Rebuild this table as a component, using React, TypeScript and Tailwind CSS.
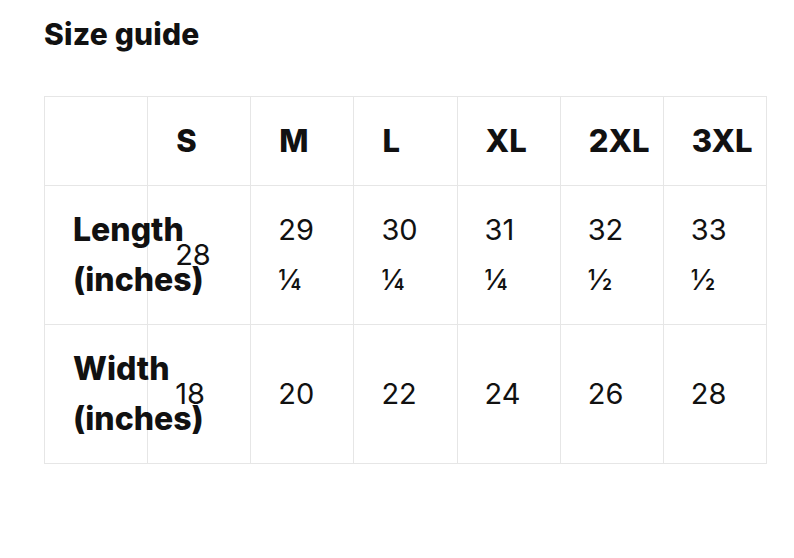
import React from 'react';

const sizes = ['S', 'M', 'L', 'XL', '2XL', '3XL'];

const rows = [
  { label: 'Length (inches)', values: ['28', '29 ¼', '30 ¼', '31 ¼', '32 ½', '33 ½'] },
  { label: 'Width (inches)', values: ['18', '20', '22', '24', '26', '28'] },
];

export default function App() {
  return (
    <div className="w-[794px] h-[558px] bg-white text-[#111] font-['Inter',sans-serif] px-[44px] pt-[14px]">
      <h1 className="text-[30px] leading-[40px] font-extrabold tracking-[0.2px]">Size guide</h1>

      <table className="mt-[42px] w-[723px] table-fixed border-collapse">
        <thead>
          <tr>
            <th className="border-[1.5px] border-[#e6e6e6] pl-[28px] py-[19px]" />
            {sizes.map((s) => (
              <th
                key={s}
                className="border-[1.5px] border-[#e6e6e6] pl-[28px] py-[19px] text-left text-[31px] leading-[50px] font-extrabold align-middle"
              >
                {s}
              </th>
            ))}
          </tr>
        </thead>
        <tbody>
          {rows.map((row) => (
            <tr key={row.label}>
              <td className="border-[1.5px] border-[#e6e6e6] pl-[28px] py-[19px] text-[32px] leading-[50px] font-extrabold align-middle">
                {row.label}
              </td>
              {row.values.map((v, i) => (
                <td
                  key={i}
                  className="border-[1.5px] border-[#e6e6e6] pl-[27px] pr-[22px] py-[19px] text-[29px] leading-[50px] font-normal align-middle"
                >
                  {v}
                </td>
              ))}
            </tr>
          ))}
        </tbody>
      </table>
    </div>
  );
}
